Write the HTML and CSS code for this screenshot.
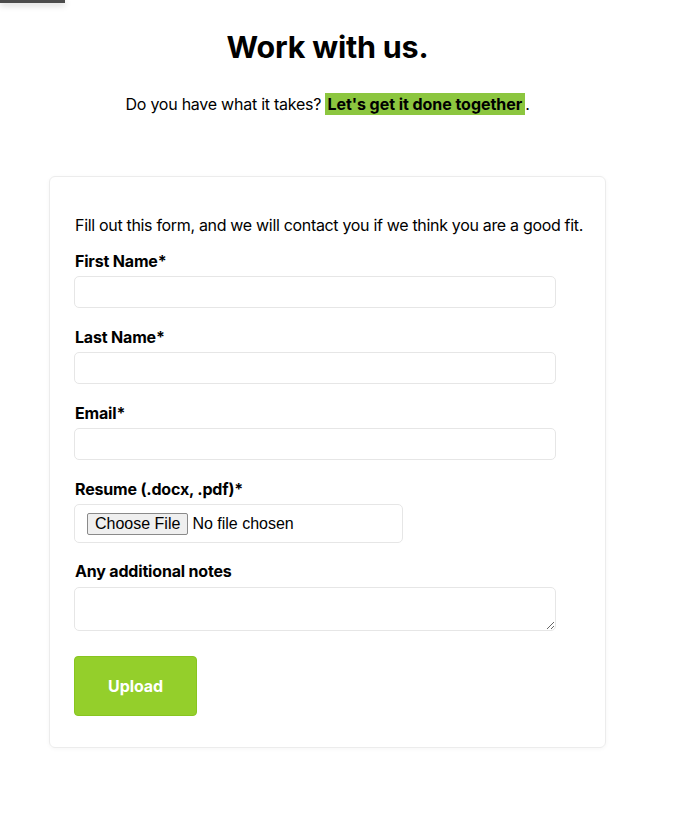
FILE: index.html
```html
<!DOCTYPE html>
<html lang="en">
<head>
<meta charset="utf-8">
<title>Work with us</title>
<link rel="stylesheet" href="styles.css">
</head>
<body>
<div class="topbar"></div>
<main class="page">
  <h1 class="title">Work with us.</h1>
  <p class="subtitle">Do you have what it takes? <span class="hl">Let's get it done together</span>.</p>
  <form class="card">
    <p class="intro">Fill out this form, and we will contact you if we think you are a good fit.</p>
    <div class="field">
      <label class="label" for="fn">First Name*</label>
      <input class="input" id="fn" type="text">
    </div>
    <div class="field">
      <label class="label" for="ln">Last Name*</label>
      <input class="input" id="ln" type="text">
    </div>
    <div class="field">
      <label class="label" for="em">Email*</label>
      <input class="input" id="em" type="email">
    </div>
    <div class="field field-file">
      <label class="label" for="cv">Resume (.docx, .pdf)*</label>
      <input class="file" id="cv" type="file">
    </div>
    <div class="field field-notes">
      <label class="label label-notes" for="nt">Any additional notes</label>
      <textarea class="notes" id="nt"></textarea>
    </div>
    <button class="btn" type="button">Upload</button>
  </form>
</main>
</body>
</html>
```
FILE: styles.css
```css
* { box-sizing: border-box; }
html, body { margin: 0; padding: 0; background: #fff; }
body {
  font-family: Inter, "Noto Sans", sans-serif;
  color: #000;
  font-size: 16px;
  letter-spacing: -0.32px;
}
.topbar {
  position: absolute;
  top: 0;
  left: 0;
  width: 65px;
  height: 3px;
  background: #4b4b4b;
  box-shadow: 0 2px 6px rgba(0,0,0,0.25);
}
.page {
  width: 655px;
  text-align: center;
  padding-top: 29px;
  padding-bottom: 60px;
}
.title {
  margin: 0;
  font-size: 30.5px;
  font-weight: 700;
  line-height: 36px;
  letter-spacing: -0.2px;
}
.subtitle {
  margin: 30px 0 0;
  line-height: 19px;
  letter-spacing: -0.25px;
}
.hl {
  background: #8cc63f;
  font-weight: 700;
  letter-spacing: -0.05px;
  padding: 1px 3px 1px 2px;
}
.card {
  margin: 62px auto 0;
  width: 557px;
  text-align: left;
  border: 1px solid #ececec;
  border-radius: 6px;
  box-shadow: 0 1px 4px rgba(0,0,0,0.04);
  padding: 39px 20px 31px 24px;
}
.intro {
  margin: 0 0 17px 1px;
  line-height: 19px;
  white-space: nowrap;
}
.field {
  margin-bottom: 20px;
}
.field-file {
  margin-bottom: 19px;
}
.field-notes {
  margin-bottom: 25px;
}
.label {
  display: block;
  font-weight: 700;
  line-height: 19px;
  margin-bottom: 5px;
  margin-left: 1px;
  letter-spacing: -0.18px;
}
.label-notes {
  margin-bottom: 6px;
}
.input {
  display: block;
  width: 482px;
  height: 32px;
  border: 1px solid #e6e6e6;
  border-radius: 5px;
  font: inherit;
  padding: 0 8px;
  outline: none;
}
.file {
  display: block;
  width: 329px;
  height: 39px;
  border: 1px solid #e6e6e6;
  border-radius: 5px;
  padding: 8px 12px;
  font-family: "Liberation Sans", Arial, sans-serif;
  font-size: 16px;
  letter-spacing: 0;
}
.file::file-selector-button {
  font-family: "Liberation Sans", Arial, sans-serif;
  font-size: 16px;
  background: #efefef;
  border: 1px solid #8a8a8a;
  border-radius: 2px;
  padding: 1px 7px;
  margin-right: 4px;
  color: #000;
}
.notes {
  display: block;
  width: 482px;
  height: 44px;
  border: 1px solid #e6e6e6;
  border-radius: 5px;
  font: inherit;
  padding: 6px 8px;
  outline: none;
}
.btn {
  display: block;
  width: 123px;
  height: 60px;
  background: #94cf2b;
  border: 1px solid #88c520;
  border-radius: 4px;
  color: #fff;
  font-family: Inter, sans-serif;
  font-weight: 700;
  font-size: 16px;
  letter-spacing: -0.1px;
  cursor: pointer;
}
```
